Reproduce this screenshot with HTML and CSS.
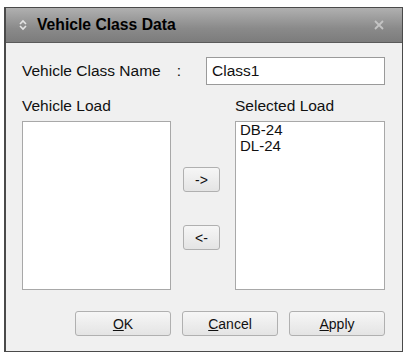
FILE: index.html
```html
<!DOCTYPE html>
<html lang="en">
<head>
    <meta charset="UTF-8">
    <title>Vehicle Class Data</title>
    <link rel="stylesheet" href="styles.css">
</head>
<body>
    <div class="dialog">
        <div class="titlebar">
            <svg class="title-icon" width="10" height="12" viewBox="0 0 10 12">
                <path d="M2 5 L5 2 L8 5" fill="none" stroke="#e4e4e4" stroke-width="1.6"/>
                <path d="M2 7 L5 10 L8 7" fill="none" stroke="#e4e4e4" stroke-width="1.6"/>
            </svg>
            <span class="title-text">Vehicle Class Data</span>
            <svg class="close-icon" width="12" height="12" viewBox="0 0 12 12">
                <path d="M2 2 L10 10 M10 2 L2 10" stroke="#c4c4c4" stroke-width="1.8"/>
            </svg>
        </div>

        <div class="content">
            <div class="name-row">
                <span class="label">Vehicle Class Name<span class="colon">:</span></span>
                <div class="textbox">Class1</div>
            </div>

            <div class="lists">
                <div class="list-col">
                    <div class="label">Vehicle Load</div>
                    <div class="listbox left"></div>
                </div>

                <div class="move-col">
                    <button class="move">-&gt;</button>
                    <button class="move">&lt;-</button>
                </div>

                <div class="list-col">
                    <div class="label">Selected Load</div>
                    <div class="listbox right">
                        <div>DB-24</div>
                        <div>DL-24</div>
                    </div>
                </div>
            </div>

            <div class="actions">
                <button class="btn"><u>O</u>K</button>
                <button class="btn"><u>C</u>ancel</button>
                <button class="btn"><u>A</u>pply</button>
            </div>
        </div>
    </div>
</body>
</html>
```

FILE: styles.css
```css
body {
    margin: 0;
    background-color: white;
    font-family: 'Liberation Sans', Arial, sans-serif;
    font-size: 15.5px;
    color: #111;
}

.dialog {
    margin: 7px 0 0 4px;
    width: 396px;
    height: 343px;
    border: 1px solid #4a4a4a;
    border-left-width: 2px;
    background-color: #f0f0f0;
    display: flex;
    flex-direction: column;
}

.titlebar {
    height: 34px;
    border-bottom: 1px solid #5a5a5a;
    background: linear-gradient(#b0b0b0, #8a8a8a 60%, #7c7c7c);
    display: flex;
    align-items: center;
    padding: 0 17px 0 12px;
}

.title-icon {
    margin-right: 9px;
}

.title-text {
    font-weight: bold;
    font-size: 15.7px;
    color: #000;
    flex: 1;
}

.content {
    flex: 1;
    display: flex;
    flex-direction: column;
    padding: 14px 17px 0 16px;
}

.name-row {
    display: flex;
    align-items: center;
    justify-content: space-between;
}

.label {
    line-height: 18px;
}

.colon {
    margin-left: 16px;
}

.textbox {
    width: 172px;
    height: 26px;
    border: 1px solid #9a9a9a;
    background-color: white;
    padding-left: 5px;
    line-height: 26px;
}

.lists {
    display: flex;
    margin-top: 12px;
}

.list-col {
    display: flex;
    flex-direction: column;
    gap: 6px;
}

.listbox {
    width: 147px;
    height: 167px;
    border: 1px solid #a8a8a8;
    background-color: white;
}

.listbox.right {
    width: 144px;
    padding-left: 4px;
    font-size: 15px;
    line-height: 16px;
}

.move-col {
    width: 64px;
    display: flex;
    flex-direction: column;
    align-items: center;
    padding-top: 70px;
    gap: 33px;
}

button {
    font-family: 'Liberation Sans', Arial, sans-serif;
    font-size: 14px;
    color: #111;
    background: linear-gradient(#f6f6f6, #e4e4e4);
    border: 1px solid #b0b0b0;
    border-radius: 3px;
    padding: 0;
}

.move {
    width: 37px;
    height: 25px;
    margin-left: -3px;
}

.actions {
    display: flex;
    justify-content: flex-end;
    gap: 11px;
    margin-top: 21px;
}

.btn {
    width: 96px;
    height: 25px;
}
```
